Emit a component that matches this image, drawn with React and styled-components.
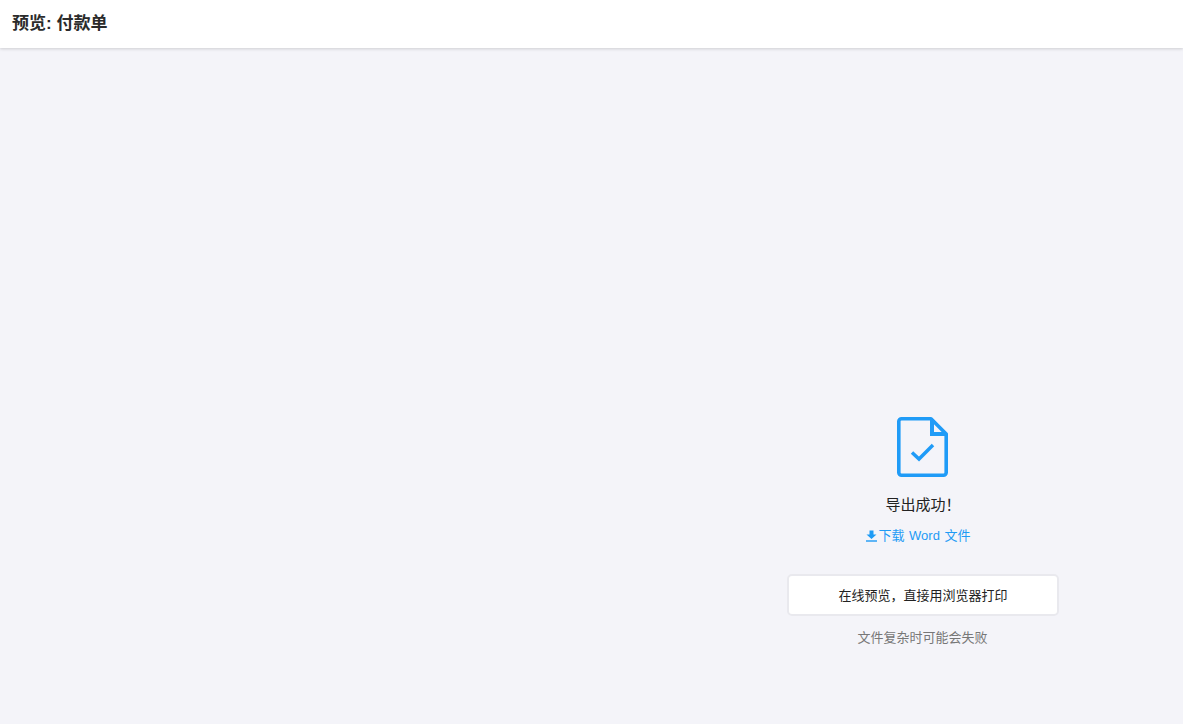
import React from 'react';
import styled, { createGlobalStyle } from 'styled-components';

const GlobalStyle = createGlobalStyle`
  html, body {
    margin: 0;
    height: 100%;
  }
  body {
    background: #f4f4f9;
    font-family: "Liberation Sans", "Noto Sans CJK SC", sans-serif;
  }
`;

const Page = styled.div`
  min-height: 724px;
  display: flex;
  flex-direction: column;
`;

const Header = styled.header`
  box-sizing: border-box;
  height: 48px;
  padding: 0 12px 5px;
  display: flex;
  align-items: center;
  background: #fff;
  box-shadow: 0 1px 3px rgba(0, 0, 0, 0.16);
`;

const Title = styled.h1`
  margin: 0;
  font-size: 17px;
  font-weight: bold;
  color: #2b2b2b;
`;

const Main = styled.main`
  flex: 1;
  display: flex;
  justify-content: flex-end;
  padding: 369px 124px 0 0;
`;

const Panel = styled.section`
  width: 272px;
  display: flex;
  flex-direction: column;
  align-items: center;
`;

const FileIcon = styled.svg`
  display: block;
  width: 51px;
  height: 60px;
  margin-right: 1px;
`;

const Message = styled.div`
  margin-top: 17px;
  font-size: 15px;
  line-height: 22px;
  color: #222;
`;

const DownloadLink = styled.a`
  margin: 10px 9px 0 0;
  display: flex;
  align-items: center;
  gap: 1px;
  font-size: 13px;
  line-height: 20px;
  word-spacing: 1px;
  color: #1e9bf5;
  text-decoration: none;
  cursor: pointer;
`;

const PreviewButton = styled.button`
  margin-top: 28px;
  width: 272px;
  height: 42px;
  padding: 0 0 2px;
  background: #fff;
  border: 2px solid #e9e9ee;
  border-radius: 5px;
  font-family: inherit;
  font-size: 13px;
  color: #222;
  cursor: pointer;
`;

const Hint = styled.p`
  margin: 12px 1px 0 0;
  font-size: 13px;
  line-height: 20px;
  color: #777;
`;

const DocCheck = () => (
  <FileIcon viewBox="0 0 51 60" fill="none" aria-hidden="true">
    <path
      d="M4.500 1.800h29.500L49.200 17v38.500a2.700 2.700 0 0 1-2.700 2.700H4.500a2.700 2.700 0 0 1-2.700-2.700V4.500a2.700 2.700 0 0 1 2.700-2.700z"
      stroke="#1f9bf7"
      strokeWidth="3.600"
      strokeLinejoin="round"
    />
    <path d="M35 2v15h14" stroke="#1f9bf7" strokeWidth="4" />
    <path d="M15 35.500l7 6.500 14-14" stroke="#1f9bf7" strokeWidth="3.500" />
  </FileIcon>
);

const DownloadGlyph = () => (
  <svg width="11" height="12" viewBox="0 0 11 12" aria-hidden="true">
    <path d="M3.500 0.500h4v4h3L5.500 9 0.500 4.500h3z" fill="#1e9bf5" />
    <rect x="0" y="10.300" width="11" height="1.400" fill="#1e9bf5" />
  </svg>
);

const App = () => (
  <Page>
    <GlobalStyle />
    <Header>
      <Title>预览: 付款单</Title>
    </Header>
    <Main>
      <Panel>
        <DocCheck />
        <Message>{'导出成功\uFF01'}</Message>
        <DownloadLink>
          <DownloadGlyph />
          下载 Word 文件
        </DownloadLink>
        <PreviewButton>{'在线预览\uFF0C直接用浏览器打印'}</PreviewButton>
        <Hint>文件复杂时可能会失败</Hint>
      </Panel>
    </Main>
  </Page>
);

export default App;
